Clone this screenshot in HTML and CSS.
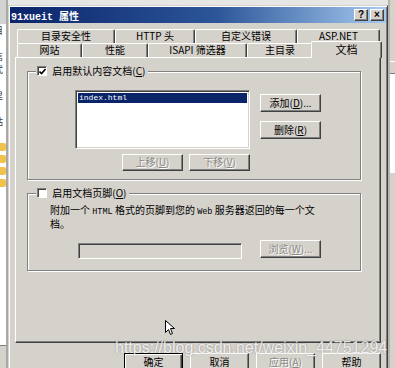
FILE: index.html
```html
<!DOCTYPE html>
<html lang="zh-CN">

<head>
    <meta charset="UTF-8">
    <meta name="viewport" content="width=device-width, initial-scale=1.0">
    <title>91xueit 属性</title>
    <link rel="stylesheet" href="styles.css">
</head>

<body>
    <div class="desk">
        <div class="peek-left">
            <div class="peek-top"></div>
            <div class="peek-list">
                <div class="peek-text">
                    <span>目</span>
                    <span class="blue">E</span>
                    <span>信</span>
                    <span>式</span>
                    <span>'</span>
                    <span>里</span>
                    <span>D</span>
                    <span>站</span>
                    <span>9</span>
                    <i class="folder"></i>
                    <i class="folder"></i>
                    <i class="folder"></i>
                    <i class="folder"></i>
                </div>
            </div>
            <div class="peek-foot"></div>
        </div>

        <div class="dialog">
            <div class="titlebar">
                <span class="title">91xueit 属性</span>
                <span class="caption-btn">?</span>
                <span class="caption-btn">×</span>
            </div>

            <div class="tabs">
                <div class="tab-row">
                    <div class="tab tab-sec">目录安全性</div>
                    <div class="tab tab-http">HTTP 头</div>
                    <div class="tab tab-err">自定义错误</div>
                    <div class="tab tab-asp">ASP.NET</div>
                </div>
                <div class="tab-row">
                    <div class="tab tab-site">网站</div>
                    <div class="tab tab-perf">性能</div>
                    <div class="tab tab-isapi">ISAPI 筛选器</div>
                    <div class="tab tab-home">主目录</div>
                    <div class="tab tab-doc on">文档</div>
                </div>
            </div>

            <div class="panel">
                <fieldset class="group">
                    <legend class="legend">
                        <span class="check">
                            <svg width="7" height="7" viewBox="0 0 7 7"><path d="M0.5 3.5 L2.5 5.5 L6.5 1" fill="none" stroke="#000" stroke-width="1.6"/></svg>
                        </span>
                        <span>启用默认内容文档(<u>C</u>)</span>
                    </legend>
                    <div class="doc-body">
                        <div class="list-row">
                            <div class="listbox">
                                <div class="list-item">index.html</div>
                            </div>
                            <div class="side-btns">
                                <div class="btn">添加(<u>D</u>)...</div>
                                <div class="btn">删除(<u>R</u>)</div>
                            </div>
                        </div>
                        <div class="move-row">
                            <div class="btn btn-sm off">上移(<u>U</u>)</div>
                            <div class="btn btn-sm off">下移(<u>V</u>)</div>
                        </div>
                    </div>
                </fieldset>

                <fieldset class="group group-foot">
                    <legend class="legend">
                        <span class="check"></span>
                        <span>启用文档页脚(<u>O</u>)</span>
                    </legend>
                    <div class="foot-body">
                        <p class="note">附加一个 <span class="latin">HTML</span> 格式的页脚到您的 <span class="latin">Web</span> 服务器返回的每一个文<br>档。</p>
                        <div class="browse-row">
                            <div class="field"></div>
                            <div class="btn off">浏览(<u>W</u>)...</div>
                        </div>
                    </div>
                </fieldset>
            </div>

            <div class="actions">
                <div class="btn btn-wide btn-default">确定</div>
                <div class="btn btn-wide">取消</div>
                <div class="btn btn-wide off">应用(<u>A</u>)</div>
                <div class="btn btn-wide">帮助</div>
            </div>
        </div>

        <div class="peek-right">
            <div class="peek-head"></div>
            <div class="peek-white"></div>
        </div>

        <svg class="cursor" width="11" height="16" viewBox="0 0 11 16">
            <path d="M0.5 0.5 L0.5 12.5 L3.5 9.5 L5.5 14.5 L7.5 13.5 L5.5 8.5 L9.5 8.5 Z" fill="#fff" stroke="#000" stroke-width="1"/>
        </svg>

        <div class="watermark">https://blog.csdn.net/weixin_44751294</div>
    </div>
</body>

</html>
```

FILE: styles.css
```css
* {
    margin: 0;
    padding: 0;
    box-sizing: border-box;
}

body {
    width: 395px;
    height: 368px;
    overflow: hidden;
    background: #e6e6e4;
    font: 10px "Noto Sans CJK SC", sans-serif;
    color: #000;
}

u {
    text-decoration: underline;
}

.desk {
    position: relative;
    display: flex;
    height: 368px;
}

/* window behind, left */
.peek-left {
    width: 8px;
    display: flex;
    flex-direction: column;
    border-right: 2px solid #a8a8a6;
}

.peek-top {
    height: 24px;
    background: #d2d2d0;
}

.peek-list {
    flex: 1;
    background: #fff;
    overflow: hidden;
}

.peek-text {
    width: 14px;
    margin-left: -6px;
    padding-top: 1px;
    display: flex;
    flex-direction: column;
    gap: 1px;
    font-size: 9px;
    line-height: 12px;
    color: #333;
}

.peek-text .blue {
    color: #2040b0;
}

.peek-text .folder {
    display: block;
    width: 12px;
    height: 8px;
    margin: 1px 0 2px;
    background: #f2c34c;
    border-radius: 2px;
}

.peek-foot {
    height: 23px;
    background: #d5d1cb;
    border-top: 1px solid #808080;
}

/* window behind, right */
.peek-right {
    width: 7px;
    background: #d5d1cb;
    border-left: 2px solid #b8b4ae;
    padding-top: 61px;
}

.peek-head {
    height: 13px;
    border-top: 1px solid #fff;
    border-bottom: 1px solid #808080;
}

.peek-white {
    height: 99px;
    background: #fff;
}

/* dialog */
.dialog {
    width: 380px;
    height: 372px;
    margin-top: 5px;
    padding: 1px;
    background: #d5d1cb;
    border: 1px solid;
    border-color: #d5d1cb #404040 #404040 #d5d1cb;
    box-shadow: inset 1px 1px #fff, inset -1px -1px #808080;
}

.titlebar {
    height: 16px;
    display: flex;
    align-items: center;
    gap: 2px;
    padding: 0 2px 0 1px;
    background: linear-gradient(to right, #0a246a 0%, #2c5698 55%, #a6caf0 100%);
}

.title {
    flex: 1;
    color: #fff;
    font: bold 10px "Liberation Mono", "Noto Sans CJK SC", monospace;
}

.caption-btn {
    width: 14px;
    height: 12px;
    background: #d5d1cb;
    border: 1px solid;
    border-color: #fff #404040 #404040 #fff;
    box-shadow: inset -1px -1px #808080;
    font: bold 10px/9px "Liberation Sans", sans-serif;
    text-align: center;
}

/* tabs */
.tabs {
    margin-top: 6px;
    padding-left: 7px;
}

.tab-row {
    display: flex;
    height: 14px;
}

.tab {
    height: 14px;
    border: 1px solid;
    border-bottom: 0;
    border-color: #fff #404040 #fff #fff;
    border-radius: 2px 2px 0 0;
    box-shadow: inset -1px 0 #808080;
    text-align: center;
    line-height: 12px;
    white-space: nowrap;
    background: #d5d1cb;
}

.tab-sec { width: 98px; }
.tab-http { width: 80px; }
.tab-err { width: 102px; }
.tab-asp { width: 83px; }
.tab-site { width: 65px; }
.tab-perf { width: 66px; }
.tab-isapi { width: 99px; }
.tab-home { width: 66px; }

.tab-doc {
    width: 71px;
}

.tab.on {
    position: relative;
    z-index: 1;
    height: 17px;
    margin: -2px -2px 0 -2px;
    line-height: 14px;
    font-size: 11px;
}

/* page */
.panel {
    height: 286px;
    margin: 0 5px;
    padding: 7px 19px 0 11px;
    border: 1px solid;
    border-color: #fff #404040 #404040 #fff;
    box-shadow: inset -1px -1px #808080;
}

.group {
    min-width: 0;
    border: 1px solid #808080;
    box-shadow: 1px 1px #fff, inset 1px 1px #fff;
}

.group-foot {
    margin-top: 7px;
}

.legend {
    margin-left: 8px;
    padding: 0 3px 0 1px;
    height: 12px;
    line-height: 12px;
    background: #d5d1cb;
}

.legend > span {
    display: inline-block;
    vertical-align: top;
}

.legend .check {
    margin-right: 3px;
}

.check {
    width: 10px;
    height: 10px;
    margin-top: 1px;
    background: #fff;
    border: 1px solid;
    border-color: #808080 #fff #fff #808080;
    box-shadow: inset 1px 1px #404040;
    line-height: 0;
    text-align: center;
}

.check svg {
    margin-top: 1px;
}

.doc-body {
    padding: 13px 0 8px 47px;
}

.list-row {
    display: flex;
    align-items: flex-start;
    gap: 10px;
}

.listbox {
    width: 175px;
    height: 59px;
    padding: 2px;
    background: #fff;
    border: 1px solid;
    border-color: #808080 #fff #fff #808080;
    box-shadow: inset 1px 1px #404040, inset -1px -1px #d5d1cb;
}

.list-item {
    height: 10px;
    padding-left: 1px;
    background: #0a246a;
    color: #fff;
    font: 8px/10px "Liberation Mono", monospace;
}

.side-btns {
    display: flex;
    flex-direction: column;
    gap: 9px;
    margin-top: 4px;
}

.btn {
    width: 61px;
    height: 18px;
    background: #d5d1cb;
    border: 1px solid;
    border-color: #fff #404040 #404040 #fff;
    box-shadow: inset -1px -1px #808080;
    text-align: center;
    line-height: 15px;
    white-space: nowrap;
}

.btn-sm {
    height: 17px;
    line-height: 14px;
}

.btn.off {
    color: #8c8984;
    text-shadow: 1px 1px #fff;
}

.move-row {
    width: 175px;
    display: flex;
    justify-content: flex-end;
    gap: 6px;
    margin-top: 5px;
}

.foot-body {
    padding: 5px 0 11px 22px;
}

.note {
    line-height: 12px;
}

.note .latin {
    font-family: "Liberation Mono", monospace;
    font-size: 8.5px;
}

.browse-row {
    display: flex;
    align-items: flex-start;
    gap: 18px;
    margin-top: 10px;
    padding-left: 28px;
}

.field {
    width: 164px;
    height: 16px;
    margin-top: 3px;
    border: 1px solid;
    border-color: #808080 #fff #fff #808080;
    box-shadow: inset 1px 1px #404040, inset -1px -1px #d5d1cb;
}

/* bottom buttons */
.actions {
    display: flex;
    justify-content: flex-end;
    gap: 7px;
    padding: 10px 5px 0 0;
}

.btn-wide {
    width: 59px;
    height: 19px;
}

.btn-default {
    border-color: #000;
    box-shadow: inset 1px 1px #fff, inset -1px -1px #404040, inset -2px -2px #808080;
}

/* overlays */
.cursor {
    position: absolute;
    left: 165px;
    top: 320px;
}

.watermark {
    position: absolute;
    left: 115px;
    top: 338px;
    font: 16px/20px "Liberation Sans", sans-serif;
    color: rgba(255, 255, 255, 0.82);
    text-shadow: 0 0 2px rgba(0, 0, 0, 0.35);
    white-space: nowrap;
}
```
